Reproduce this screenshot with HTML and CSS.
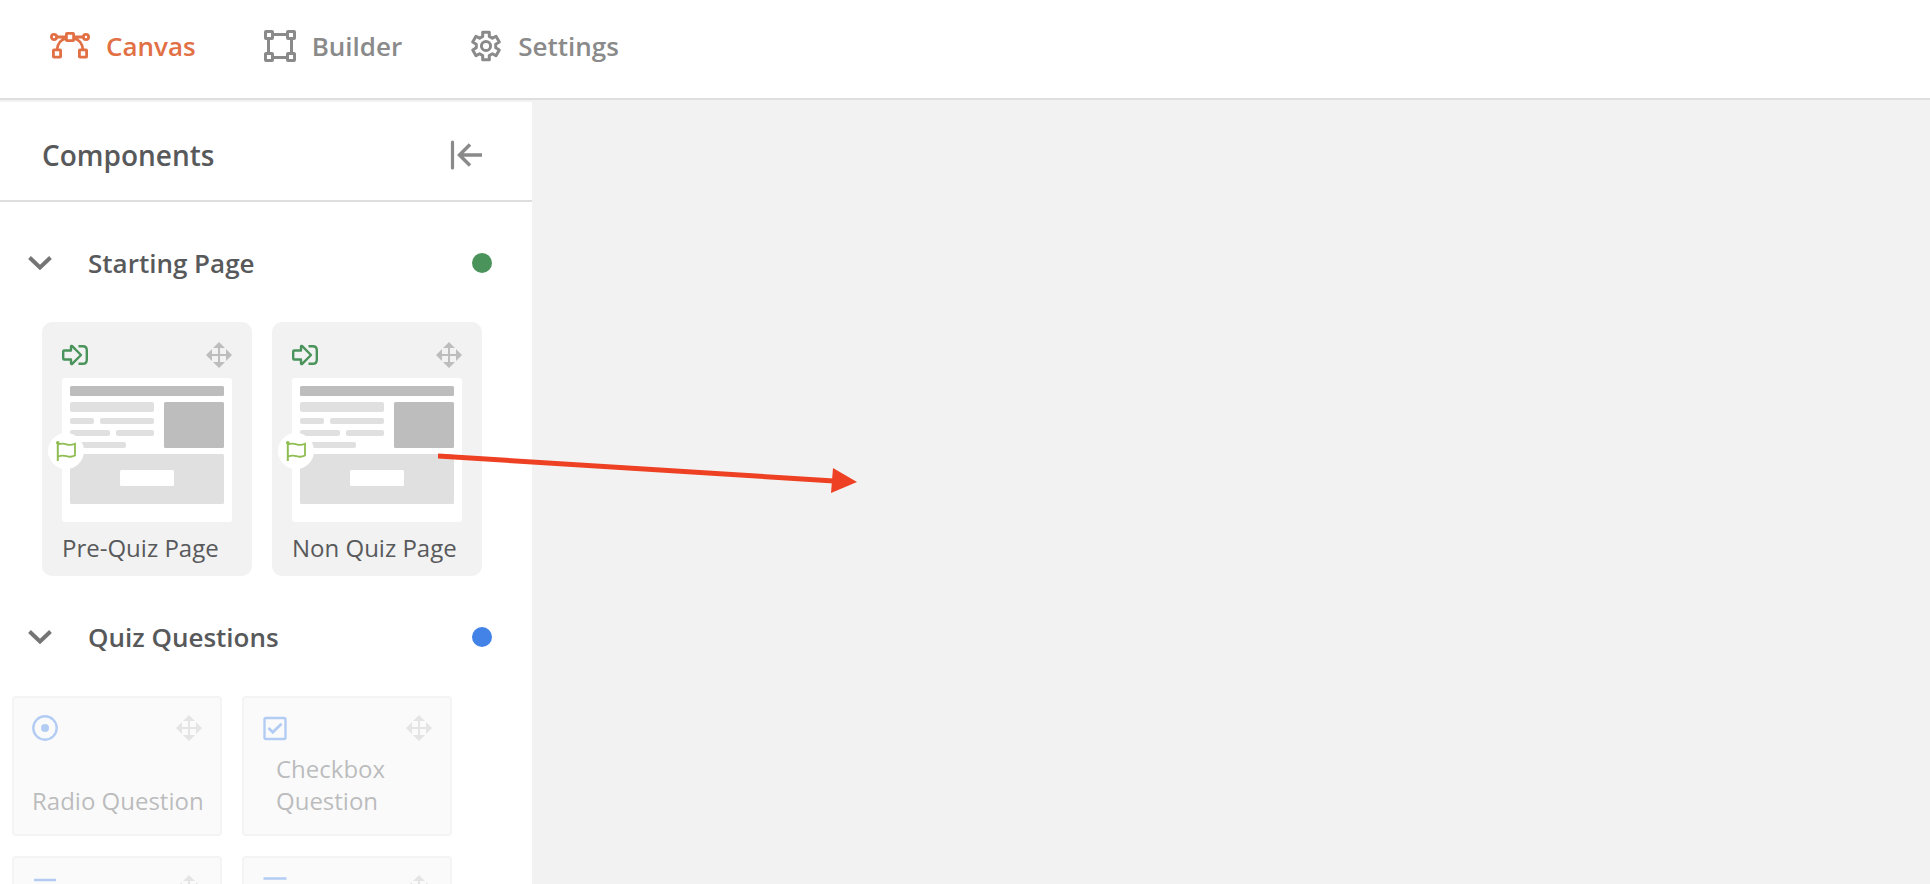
FILE: index.html
```html
<!DOCTYPE html>
<html lang="en">
<head>
<meta charset="utf-8">
<title>Quiz Canvas</title>
<link rel="stylesheet" href="styles.css">
</head>
<body>
<svg class="symbols" aria-hidden="true">
  <symbol id="move" viewBox="0 0 26 26">
    <path d="M13 0l6 6H7zM13 26l6-6H7zM0 13l6-6v12zM26 13l-6-6v12z" fill="currentColor"/>
    <path d="M13 5v16M5 13h16" fill="none" stroke="currentColor" stroke-width="2"/>
  </symbol>
  <symbol id="enter" viewBox="0 0 26 26">
    <path d="M2.200 8.500H9V4.600q.2-1.200 1.200-.5L19 13l-8.800 8.900q-1 .7-1.200-.5V17.500H2.200q-1 0-1-1v-7q0-1 1-1z" fill="none" stroke="currentColor" stroke-width="2.400" stroke-linejoin="round"/>
    <path d="M16.500 4.200h4.300q4 0 4 4v9.600q0 4-4 4h-4.300" fill="none" stroke="currentColor" stroke-width="2.400"/>
  </symbol>
  <symbol id="flag" viewBox="0 0 20 20">
    <path d="M1.800 1v19" fill="none" stroke="currentColor" stroke-width="2"/>
    <circle cx="1.800" cy="1.800" r="1.800" fill="currentColor"/>
    <path d="M2 3.500c3.500-1.500 5.500-1.200 8.500-.2s5.500.8 8.500-.6v11.800c-3 1.600-5.500 1.600-8.500.7s-5-1-8.500.3" fill="none" stroke="currentColor" stroke-width="1.800"/>
  </symbol>
  <symbol id="chevron" viewBox="0 0 24 14">
    <path d="M1.500 1.500L12 11.500 22.500 1.500" fill="none" stroke="currentColor" stroke-width="4"/>
  </symbol>
  <symbol id="mockup" viewBox="0 0 170 144">
    <rect width="170" height="144" rx="3" fill="#fff"/>
    <g fill="#bdbdbd">
      <rect x="8" y="8" width="154" height="10" rx="1.500"/>
      <rect x="102" y="24" width="60" height="46" rx="1.500"/>
    </g>
    <g fill="#e0e0e0">
      <rect x="8" y="24" width="84" height="10" rx="2"/>
      <rect x="8" y="40" width="24" height="6" rx="2"/>
      <rect x="38" y="40" width="54" height="6" rx="2"/>
      <rect x="8" y="52" width="40" height="6" rx="2"/>
      <rect x="54" y="52" width="38" height="6" rx="2"/>
      <rect x="8" y="64" width="56" height="6" rx="2"/>
      <rect x="8" y="76" width="154" height="50" rx="1.500"/>
    </g>
    <rect x="58" y="92" width="54" height="16" rx="1.500" fill="#fff"/>
  </symbol>
</svg>

<header class="topbar">
  <nav class="tabs">
    <a class="tab tab-active" href="#canvas" aria-current="page">
      <svg width="40" height="32" viewBox="0 0 40 32" fill="none" stroke="currentColor" stroke-width="2.800">
        <path d="M6.500 7H16M24 7h9.500M7 20C7.500 13.500 11 9.500 16 8.500M33 20C32.500 13.500 29 9.500 24 8.500"/>
        <circle cx="4" cy="7" r="2.600"/><circle cx="36" cy="7" r="2.600"/>
        <rect x="16.400" y="3.400" width="7.200" height="7.200" rx=".6"/>
        <rect x="3.400" y="19.900" width="7.200" height="7.200" rx=".6"/>
        <rect x="29.400" y="19.900" width="7.200" height="7.200" rx=".6"/>
      </svg>
      Canvas
    </a>
    <a class="tab" href="#builder">
      <svg width="32" height="32" viewBox="0 0 32 32" fill="none" stroke="currentColor" stroke-width="3">
        <path d="M10 4.500h12M10 27.500h12M4.500 10v12M27.500 10v12"/>
        <rect x="1.500" y="1.500" width="7" height="7" rx=".5"/><rect x="23.500" y="1.500" width="7" height="7" rx=".5"/>
        <rect x="1.500" y="23.500" width="7" height="7" rx=".5"/><rect x="23.500" y="23.500" width="7" height="7" rx=".5"/>
      </svg>
      Builder
    </a>
    <a class="tab" href="#settings">
      <svg width="32" height="32" viewBox="0 0 32 32" fill="none" stroke="currentColor" stroke-width="3" stroke-linejoin="round">
        <path d="M12.700 2.200h6.600v4.300l3.100 1.800 3.600-2 3.300 5.700-3.600 2.200v3.600l3.600 2.200-3.300 5.700-3.600-2-3.100 1.800v4.300h-6.600v-4.300l-3.100-1.800-3.600 2L2.700 20l3.600-2.200v-3.600L2.700 12 6 6.300l3.600 2 3.100-1.800z"/>
        <circle cx="16" cy="16" r="4.600"/>
      </svg>
      Settings
    </a>
  </nav>
</header>

<div class="workspace">
  <aside class="sidebar">
    <div class="sidebar-head">
      <h1 class="sidebar-title">Components</h1>
      <button class="icon-button" type="button" aria-label="Collapse components">
        <svg width="32" height="30" viewBox="0 0 32 30" fill="none" stroke="currentColor">
          <path d="M2.500 2v26" stroke-width="3.200" stroke-linecap="round"/>
          <path d="M32 15H9M20 4.500L9.500 15 20 25.500" stroke-width="3.500"/>
        </svg>
      </button>
    </div>

    <section class="group">
      <h2 class="group-title">
        <button class="group-toggle" type="button" aria-expanded="true">
          <svg class="chevron"><use href="#chevron"/></svg>
          <span class="group-name">Starting Page</span>
          <span class="dot dot-green"></span>
        </button>
      </h2>
      <ul class="cards">
        <li class="card">
          <div class="card-top">
            <svg class="icon enter"><use href="#enter"/></svg>
            <svg class="icon move"><use href="#move"/></svg>
          </div>
          <div class="preview">
            <svg class="mockup"><use href="#mockup"/></svg>
            <span class="badge"><svg class="flag"><use href="#flag"/></svg></span>
          </div>
          <span class="card-label">Pre-Quiz Page</span>
        </li>
        <li class="card">
          <div class="card-top">
            <svg class="icon enter"><use href="#enter"/></svg>
            <svg class="icon move"><use href="#move"/></svg>
          </div>
          <div class="preview">
            <svg class="mockup"><use href="#mockup"/></svg>
            <span class="badge"><svg class="flag"><use href="#flag"/></svg></span>
          </div>
          <span class="card-label">Non Quiz Page</span>
        </li>
      </ul>
    </section>

    <section class="group">
      <h2 class="group-title">
        <button class="group-toggle" type="button" aria-expanded="true">
          <svg class="chevron"><use href="#chevron"/></svg>
          <span class="group-name">Quiz Questions</span>
          <span class="dot dot-blue"></span>
        </button>
      </h2>
      <ul class="cards cards-disabled">
        <li class="card card-question">
          <div class="card-top">
            <svg class="icon question" viewBox="0 0 26 26"><circle cx="13" cy="13" r="11.700" fill="none" stroke="currentColor" stroke-width="2.400"/><circle cx="13" cy="13" r="4" fill="currentColor"/></svg>
            <svg class="icon move"><use href="#move"/></svg>
          </div>
          <span class="card-label">Radio Question</span>
        </li>
        <li class="card card-question">
          <div class="card-top">
            <svg class="icon question" viewBox="0 0 26 26" fill="none" stroke="currentColor"><rect x="2.500" y="3" width="21" height="21" rx="1.500" stroke-width="2.400"/><path d="M6.500 13l4.300 4.300 8.700-8.600" stroke-width="2.800"/></svg>
            <svg class="icon move"><use href="#move"/></svg>
          </div>
          <span class="card-label card-label-wrapped">Checkbox Question</span>
        </li>
        <li class="card card-question">
          <div class="card-top">
            <svg class="icon question" viewBox="0 0 26 26" fill="none" stroke="currentColor" stroke-width="2.500"><path d="M2 5h22M2 13h22M2 21h14"/></svg>
            <svg class="icon move"><use href="#move"/></svg>
          </div>
        </li>
        <li class="card card-question">
          <div class="card-top">
            <svg class="icon question" viewBox="0 0 26 26" fill="none" stroke="currentColor" stroke-width="2.500"><path d="M1.500 3.500h23M1.500 14h23M1.500 21h14"/></svg>
            <svg class="icon move"><use href="#move"/></svg>
          </div>
        </li>
      </ul>
    </section>
  </aside>
  <main class="canvas" id="canvas"></main>
</div>

<svg class="drag-arrow" width="420" height="56" viewBox="0 0 420 56" aria-hidden="true">
  <path d="M0 16L396 41" fill="none" stroke="#ee4023" stroke-width="5"/>
  <path d="M395 28l24 14-26 11z" fill="#ee4023"/>
</svg>
</body>
</html>
```

FILE: styles.css
```css
* {
  box-sizing: border-box;
}

body {
  display: flex;
  flex-direction: column;
  height: 100vh;
  margin: 0;
  overflow: hidden;
  background: #f2f2f2;
  color: #58595b;
  font-family: "Open Sans", "Noto Sans", sans-serif;
}

h1,
h2,
ul {
  margin: 0;
  padding: 0;
}

svg {
  display: block;
  flex: none;
}

button {
  padding: 0;
  border: 0;
  background: none;
  color: inherit;
  font: inherit;
  text-align: left;
  cursor: pointer;
}

.symbols {
  display: none;
}

.topbar {
  flex: none;
  padding: 28px 50px 34px;
  border-bottom: 2px solid #dedede;
  background: #fff;
}

.tabs {
  display: flex;
  gap: 68px;
}

.tab {
  display: flex;
  align-items: center;
  gap: 16px;
  color: #8a8a8a;
  font-size: 26px;
  font-weight: 600;
  line-height: 36px;
  text-decoration: none;
}

.tab-active {
  color: #e27045;
}

.workspace {
  display: flex;
  flex: 1;
  min-height: 0;
  padding-top: 2px;
}

.sidebar {
  flex: none;
  width: 532px;
  overflow: hidden;
  background: #fff;
}

.sidebar-head {
  display: flex;
  align-items: center;
  justify-content: space-between;
  padding: 36px 50px 28px 42px;
  border-bottom: 2px solid #dedede;
}

.sidebar-title {
  font-size: 28px;
  font-weight: 600;
  line-height: 34px;
}

.icon-button {
  color: #8a8a8a;
}

.group {
  padding-top: 44px;
}

.group-title {
  font-size: 26px;
  font-weight: 600;
  line-height: 34px;
}

.group-toggle {
  display: flex;
  align-items: center;
  width: 100%;
  padding: 0 40px 2px 28px;
}

.chevron {
  width: 24px;
  height: 14px;
  color: #757575;
}

.group-name {
  flex: 1;
  padding-left: 36px;
}

.dot {
  width: 20px;
  height: 20px;
  border-radius: 50%;
}

.dot-green {
  background: #4a945b;
}

.dot-blue {
  background: #4382e6;
}

.cards {
  display: grid;
  grid-template-columns: 210px 210px;
  gap: 20px;
  padding: 40px 0 0 42px;
  list-style: none;
}

.cards-disabled {
  padding-left: 12px;
}

.card {
  padding: 20px 20px 12px;
  border-radius: 10px;
  background: #f2f2f2;
}

.card-top {
  display: flex;
  justify-content: space-between;
}

.icon {
  width: 26px;
  height: 26px;
}

.enter {
  color: #4a945b;
}

.move {
  color: #bdbdbd;
}

.preview {
  position: relative;
  margin: 10px 0;
}

.mockup {
  width: 100%;
  height: 144px;
}

.badge {
  position: absolute;
  bottom: 53px;
  left: -14px;
  display: grid;
  place-items: center;
  width: 36px;
  height: 36px;
  border-radius: 50%;
  background: #fff;
  color: #8fbd52;
}

.flag {
  width: 20px;
  height: 20px;
}

.card-label {
  display: block;
  font-size: 24px;
  line-height: 32px;
  white-space: nowrap;
}

.card-question {
  display: flex;
  flex-direction: column;
  justify-content: space-between;
  height: 140px;
  padding: 17px 18px;
  border: 2px solid #e4e4e4;
  border-radius: 4px;
  background: #f5f5f5;
  opacity: 0.4;
}

.card-label-wrapped {
  padding-left: 14px;
  white-space: normal;
}

.question {
  color: #4382e6;
}

.canvas {
  flex: 1;
}

.drag-arrow {
  position: absolute;
  top: 440px;
  left: 438px;
}
```
